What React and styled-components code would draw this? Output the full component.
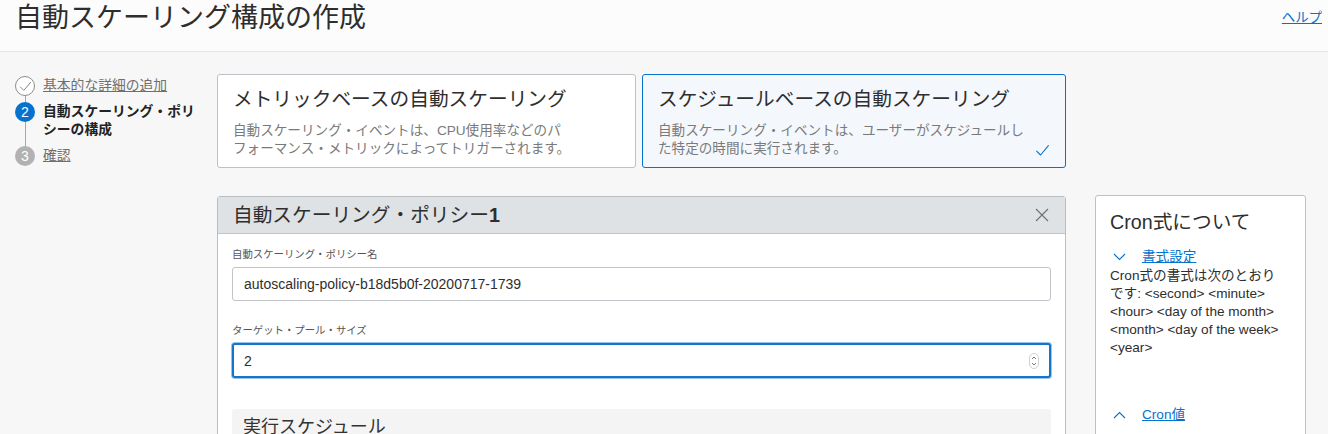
import React from "react";
import styled, { createGlobalStyle } from "styled-components";

const FONT = `"Liberation Sans", "Noto Sans CJK JP", sans-serif`;

const Global = createGlobalStyle`
  html, body { margin: 0; padding: 0; background: #f7f7f7; }
  body { font-family: ${FONT}; color: #333; }
  * { box-sizing: border-box; }
`;

const Page = styled.div`
  width: 1328px;
  height: 434px;
  overflow: hidden;
  background: #f7f7f7;
`;

const Header = styled.header`
  height: 52px;
  background: #fcfcfc;
  border-bottom: 1px solid #e4e4e4;
  display: flex;
  justify-content: space-between;
  align-items: flex-start;
  padding: 0 6px 0 15px;
`;

const Title = styled.h1`
  margin: 0;
  font-size: 27px;
  line-height: 37px;
  font-weight: 400;
  color: #2e2e2e;
`;

const HelpLink = styled.a`
  font-size: 13.4px;
  line-height: 36px;
  color: #0572ce;
  text-decoration: underline;
`;

const Body = styled.div`
  display: flex;
  align-items: flex-start;
  padding: 22px 22px 0 15px;
`;

const Nav = styled.nav`
  width: 202px;
  flex: none;
  display: flex;
  flex-direction: column;
  padding-top: 2px;
`;

const Step = styled.div`
  display: flex;
  gap: 8px;
  padding-bottom: ${(p) => (p.$last ? 0 : 7)}px;
`;

const Rail = styled.div`
  width: 20px;
  flex: none;
  display: flex;
  flex-direction: column;
  align-items: center;
`;

const Connector = styled.div`
  flex: 1;
  width: 1px;
  background: #a9a9a9;
  margin-bottom: -7px;
`;

const Circle = styled.div`
  width: 20px;
  height: 20px;
  border-radius: 50%;
  flex: none;
  display: flex;
  align-items: center;
  justify-content: center;
  font-size: 14px;
  color: #fff;
  background: ${(p) =>
    p.$state === "current" ? "#0572ce" : p.$state === "done" ? "#fff" : "#b2b2b2"};
  border: ${(p) => (p.$state === "done" ? "1px solid #8c8c8c" : "none")};
`;

const StepText = styled.div`
  font-size: 13.8px;
  line-height: 18px;
  padding-top: 1px;
  max-width: 160px;
  color: ${(p) => (p.$current ? "#222" : "#6f6f6f")};
  font-weight: ${(p) => (p.$current ? 700 : 400)};
  text-decoration: ${(p) => (p.$current ? "none" : "underline")};
`;

const Main = styled.main`
  width: 849px;
  flex: none;
  display: flex;
  flex-direction: column;
  gap: 28px;
`;

const Cards = styled.div`
  display: grid;
  grid-template-columns: 419px 1fr;
  gap: 6px;
`;

const Card = styled.div`
  height: 94px;
  border: 1px solid ${(p) => (p.$selected ? "#0572ce" : "#bcc1c7")};
  background: ${(p) => (p.$selected ? "#f4f8fc" : "#fff")};
  border-radius: 3px;
  padding: 12px 15px 0 15px;
`;

const CardTitle = styled.div`
  font-size: 19.7px;
  line-height: 24px;
  color: #2e2e2e;
  white-space: nowrap;
`;

const CardFoot = styled.div`
  margin-top: 11px;
  display: flex;
  justify-content: space-between;
  align-items: flex-end;
`;

const CardDesc = styled.div`
  font-size: 13.6px;
  line-height: 18px;
  color: #7a7a7a;
  white-space: nowrap;
`;

const Panel = styled.section`
  border: 1px solid #b9bec4;
  border-radius: 3px 3px 0 0;
  background: #fff;
  height: 260px;
`;

const PanelHead = styled.div`
  height: 37px;
  background: #dee2e5;
  border-bottom: 1px solid #bfc4c9;
  display: flex;
  align-items: center;
  justify-content: space-between;
  padding: 0 16px 0 15px;
`;

const PanelTitle = styled.h2`
  margin: 0;
  font-size: 19.7px;
  line-height: 24px;
  font-weight: 400;
  color: #2e2e2e;
  b { font-weight: 700; }
`;

const PanelBody = styled.div`
  padding: 14px 14px 0 14px;
`;

const Field = styled.div`
  margin-bottom: ${(p) => p.$mb || 23}px;
`;

const Label = styled.label`
  display: block;
  font-size: 10.4px;
  line-height: 14px;
  color: #555;
  margin-bottom: 5px;
`;

const InputBox = styled.div`
  height: ${(p) => (p.$focus ? 35 : 34)}px;
  border: ${(p) => (p.$focus ? "2px solid #1574cc" : "1px solid #c1c5ca")};
  box-shadow: ${(p) => (p.$focus ? "0 0 0 1px #9cc2ea" : "none")};
  border-radius: 3px;
  background: #fff;
  display: flex;
  align-items: center;
  padding: 0 ${(p) => (p.$focus ? 10 : 11)}px;
`;

const TextInput = styled.input`
  flex: 1;
  border: none;
  outline: none;
  background: transparent;
  padding: 0;
  font-family: ${FONT};
  font-size: 14px;
  color: #2e2e2e;
`;

const Section = styled.div`
  background: #f4f4f4;
  border-radius: 3px;
  padding: 6px 11px;
  margin-top: 8px;
`;

const SectionTitle = styled.h3`
  margin: 0;
  font-size: 18px;
  line-height: 24px;
  font-weight: 400;
  color: #333;
`;

const Aside = styled.aside`
  width: 211px;
  flex: none;
  margin-left: 29px;
  margin-top: 121px;
  height: 260px;
  background: #fff;
  border: 1px solid #bcc1c7;
  border-radius: 3px 3px 0 0;
  padding: 14px 14px 0 14px;
`;

const AsideTitle = styled.h2`
  margin: 0 0 14px;
  font-size: 19.7px;
  line-height: 24px;
  font-weight: 400;
  color: #2e2e2e;
`;

const Disclosure = styled.div`
  display: flex;
  align-items: center;
  gap: 16px;
  height: 18px;
  padding-left: 3px;
  margin-top: ${(p) => p.$mt || 0}px;
  margin-bottom: 1px;
`;

const DiscLink = styled.a`
  font-size: 13.6px;
  line-height: 18px;
  color: #0572ce;
  text-decoration: underline;
`;

const AsideText = styled.p`
  margin: 0;
  font-size: 13.6px;
  line-height: 18px;
  color: #2e2e2e;
  white-space: nowrap;
`;

const Check = ({ color = "#777", size = 14, w = 1 }) => (
  <svg width={size} height={size} viewBox="0 0 14 14" fill="none">
    <path d="M1.5 7.5 L5.2 11.2 L12.5 2.5" stroke={color} strokeWidth={w} strokeLinecap="round" strokeLinejoin="round" />
  </svg>
);

const CloseIcon = () => (
  <svg width="14" height="14" viewBox="0 0 14 14" fill="none">
    <path d="M1 1 L13 13 M13 1 L1 13" stroke="#6f6f6f" strokeWidth="1.1" />
  </svg>
);

const Chevron = ({ up }) => (
  <svg width="13" height="8" viewBox="0 0 13 8" fill="none">
    <path d={up ? "M1 7 L6.5 1.5 L12 7" : "M1 1 L6.5 6.5 L12 1"} stroke="#0572ce" strokeWidth="1.1" />
  </svg>
);

const Spinner = () => (
  <svg width="10" height="16" viewBox="0 0 10 16" fill="none">
    <rect x="0.5" y="0.5" width="9" height="15" rx="4.5" fill="#fff" stroke="#cfcfcf" />
    <path d="M3 6 L5 4 L7 6" stroke="#666" strokeWidth="0.9" />
    <path d="M3 10 L5 12 L7 10" stroke="#666" strokeWidth="0.9" />
  </svg>
);

export default function App() {
  return (
    <Page>
      <Global />
      <Header>
        <Title>自動スケーリング構成の作成</Title>
        <HelpLink href="#">ヘルプ</HelpLink>
      </Header>
      <Body>
        <Nav>
          <Step>
            <Rail>
              <Circle $state="done">
                <Check color="#7d7d7d" size={13} />
              </Circle>
              <Connector />
            </Rail>
            <StepText>基本的な詳細の追加</StepText>
          </Step>
          <Step>
            <Rail>
              <Circle $state="current">2</Circle>
              <Connector />
            </Rail>
            <StepText $current>自動スケーリング・ポリシーの構成</StepText>
          </Step>
          <Step $last>
            <Rail>
              <Circle $state="todo">3</Circle>
            </Rail>
            <StepText>確認</StepText>
          </Step>
        </Nav>
        <Main>
          <Cards>
            <Card>
              <CardTitle>メトリックベースの自動スケーリング</CardTitle>
              <CardFoot>
                <CardDesc>
                  自動スケーリング・イベントは、CPU使用率などのパ
                  <br />
                  フォーマンス・メトリックによってトリガーされます。
                </CardDesc>
              </CardFoot>
            </Card>
            <Card $selected>
              <CardTitle>スケジュールベースの自動スケーリング</CardTitle>
              <CardFoot>
                <CardDesc>
                  自動スケーリング・イベントは、ユーザーがスケジュールし
                  <br />
                  た特定の時間に実行されます。
                </CardDesc>
                <Check color="#0572ce" size={15} />
              </CardFoot>
            </Card>
          </Cards>
          <Panel>
            <PanelHead>
              <PanelTitle>
                自動スケーリング・ポリシー<b>1</b>
              </PanelTitle>
              <CloseIcon />
            </PanelHead>
            <PanelBody>
              <Field>
                <Label>自動スケーリング・ポリシー名</Label>
                <InputBox>
                  <TextInput defaultValue="autoscaling-policy-b18d5b0f-20200717-1739" />
                </InputBox>
              </Field>
              <Field $mb={31}>
                <Label>ターゲット・プール・サイズ</Label>
                <InputBox $focus>
                  <TextInput defaultValue="2" />
                  <Spinner />
                </InputBox>
              </Field>
              <Section>
                <SectionTitle>実行スケジュール</SectionTitle>
              </Section>
            </PanelBody>
          </Panel>
        </Main>
        <Aside>
          <AsideTitle>Cron式について</AsideTitle>
          <Disclosure>
            <Chevron />
            <DiscLink href="#">書式設定</DiscLink>
          </Disclosure>
          <AsideText>
            Cron式の書式は次のとおり
            <br />
            です: &lt;second&gt; &lt;minute&gt;
            <br />
            &lt;hour&gt; &lt;day of the month&gt;
            <br />
            &lt;month&gt; &lt;day of the week&gt;
            <br />
            &lt;year&gt;
          </AsideText>
          <Disclosure $mt={49}>
            <Chevron up />
            <DiscLink href="#">Cron値</DiscLink>
          </Disclosure>
        </Aside>
      </Body>
    </Page>
  );
}
